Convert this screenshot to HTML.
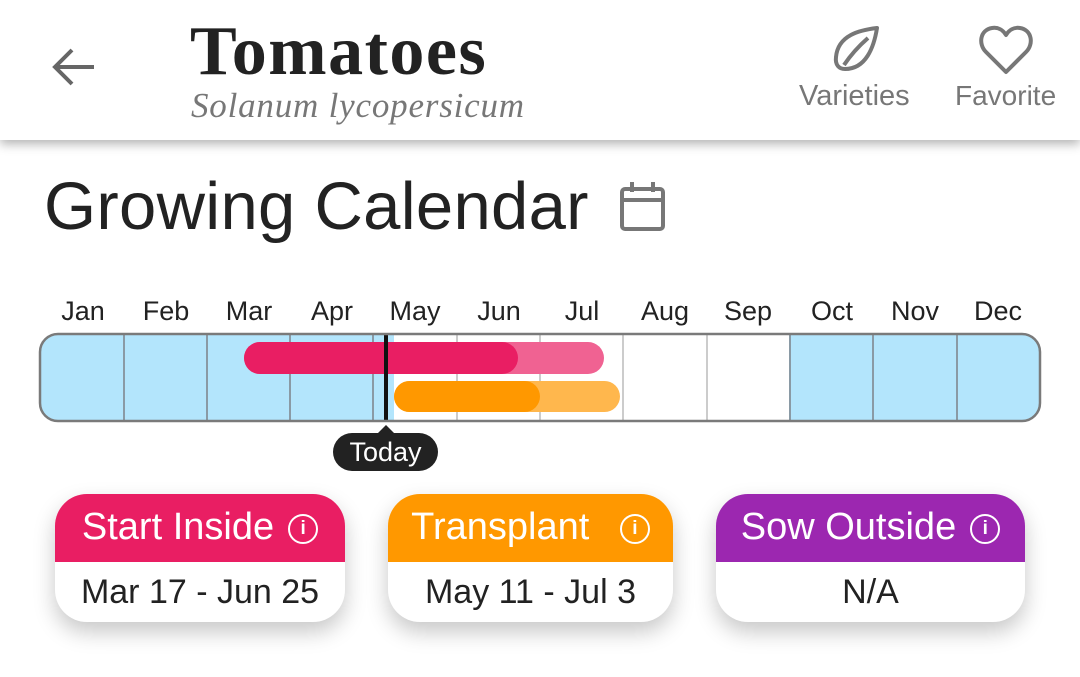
<!DOCTYPE html>
<html><head><style>
body{margin:0;width:1080px;height:677px;background:#fff;font-family:"Liberation Sans",sans-serif;position:relative;overflow:hidden}
.hdr{position:absolute;left:0;top:0;width:1080px;height:140px;background:#fff;box-shadow:0 4px 10px rgba(0,0,0,.3)}
.abs{position:absolute}
.mon{position:absolute;top:296px;font-size:27px;color:#222;width:84px;text-align:center}
.card{position:absolute;top:494px;height:128px;border-radius:32px;overflow:hidden;background:#fff;box-shadow:0 10px 22px rgba(0,0,0,.22)}
.ch{height:68px;color:#fff;font-size:38px;line-height:66px;text-align:center;white-space:nowrap}
.cb{font-size:34px;color:#222;text-align:center;line-height:60px}
.info{display:inline-block;width:26px;height:26px;border:2.5px solid #fff;border-radius:50%;font-size:19px;line-height:26px;font-weight:bold;vertical-align:5px;margin-left:14px;font-family:"Liberation Sans",sans-serif}
</style></head><body>
<div class="hdr">
<svg class="abs" style="left:50px;top:45px" width="46" height="44" viewBox="0 0 46 44"><path d="M44 22H6M22 5L5 22l17 17" fill="none" stroke="#666" stroke-width="4"/></svg>
<div class="abs" style="left:190px;top:12px;font-family:'Liberation Serif',serif;font-weight:bold;font-size:70px;color:#222;letter-spacing:1.5px">Tomatoes</div>
<div class="abs" style="left:191px;top:86px;font-family:'Liberation Serif',serif;font-style:italic;font-size:35px;color:#777;letter-spacing:0.8px">Solanum lycopersicum</div>
<svg class="abs" style="left:830px;top:25px" width="52" height="50" viewBox="0 0 52 50"><path d="M47 3C30 5 8 10 6 32c-1 8 3 12 9 12C36 44 44 22 47 3zM14 40C22 28 30 20 38 13" fill="none" stroke="#777" stroke-width="4" stroke-linejoin="round"/></svg>
<div class="abs" style="left:799px;top:80px;font-size:29px;color:#777">Varieties</div>
<svg class="abs" style="left:978px;top:24px" width="56" height="52" viewBox="0 0 56 52"><path d="M28 48L8 28C0 20 2 6 14 4c6-1 11 2 14 7 3-5 8-8 14-7 12 2 14 16 6 24z" fill="none" stroke="#777" stroke-width="4" stroke-linejoin="round"/></svg>
<div class="abs" style="left:955px;top:80px;font-size:28px;color:#777">Favorite</div>
</div>
<div class="abs" style="left:44px;top:168px;font-size:67px;color:#222;letter-spacing:0.3px">Growing Calendar</div>
<svg class="abs" style="left:618px;top:180px" width="50" height="54" viewBox="0 0 50 54"><rect x="4" y="9" width="41" height="40" rx="3" fill="none" stroke="#777" stroke-width="4"/><path d="M4 20h41M14 2v10M35 2v10" stroke="#777" stroke-width="4"/></svg>
<div class="mon" style="left:41px">Jan</div><div class="mon" style="left:124px">Feb</div><div class="mon" style="left:207px">Mar</div><div class="mon" style="left:290px">Apr</div><div class="mon" style="left:373px">May</div><div class="mon" style="left:457px">Jun</div><div class="mon" style="left:540px">Jul</div><div class="mon" style="left:623px">Aug</div><div class="mon" style="left:706px">Sep</div><div class="mon" style="left:790px">Oct</div><div class="mon" style="left:873px">Nov</div><div class="mon" style="left:956px">Dec</div>
<svg class="abs" style="left:38px;top:332px" width="1004" height="92" viewBox="0 0 1004 92">
<defs><clipPath id="c"><rect x="2" y="2" width="1000" height="87" rx="18"/></clipPath></defs>
<g clip-path="url(#c)"><rect x="0" y="0" width="1004" height="92" fill="#fff"/>
<rect x="0" y="0" width="356" height="92" fill="#b3e5fc"/><rect x="752" y="0" width="252" height="92" fill="#b3e5fc"/>
<g stroke-width="2"><path d="M86 0v92M169 0v92M252 0v92M335 0v92M752 0v92M835 0v92M919 0v92" stroke="#8a9aa5"/><path d="M419 0v92M502 0v92M585 0v92M669 0v92" stroke="#ccc"/></g>
<rect x="206" y="10" width="360" height="32" rx="16" fill="#f06292"/><rect x="206" y="10" width="274" height="32" rx="16" fill="#e91e63"/>
<rect x="356" y="49" width="226" height="31" rx="15.5" fill="#ffb74d"/><rect x="356" y="49" width="146" height="31" rx="15.5" fill="#ff9800"/>
<rect x="346" y="0" width="4" height="92" fill="#111"/></g>
<rect x="2" y="2" width="1000" height="87" rx="18" fill="none" stroke="#7a7a7a" stroke-width="2.5"/>
</svg>
<svg class="abs" style="left:376px;top:423px" width="20" height="12"><path d="M0 12L10 2 20 12z" fill="#222"/></svg>
<div class="abs" style="left:333px;top:433px;width:105px;height:38px;border-radius:19px;background:#222;color:#fff;font-size:27px;text-align:center;line-height:38px">Today</div>
<div class="card" style="left:55px;width:290px"><div class="ch" style="background:#e91e63">Start Inside<span class="info">i</span></div><div class="cb">Mar 17 - Jun 25</div></div>
<div class="card" style="left:388px;width:285px"><div class="ch" style="background:#ff9800">Transplant <span class="info" style="margin-left:20px">i</span></div><div class="cb">May 11 - Jul 3</div></div>
<div class="card" style="left:716px;width:309px"><div class="ch" style="background:#9c27b0">Sow Outside<span class="info">i</span></div><div class="cb">N/A</div></div>
</body></html>
